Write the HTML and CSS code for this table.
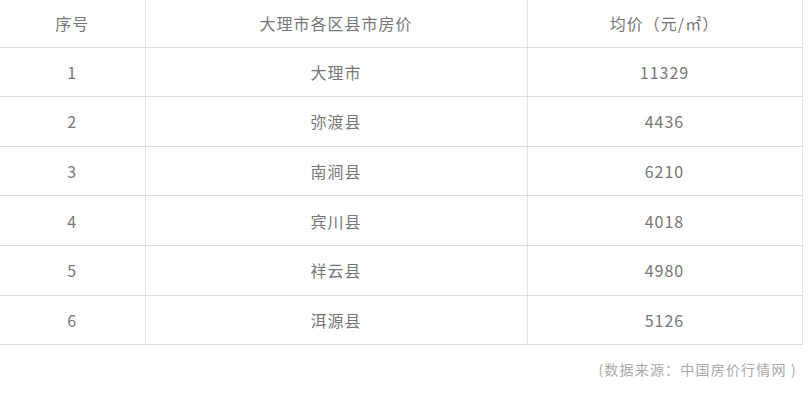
FILE: index.html
```html
<!DOCTYPE html>
<html lang="zh">
<head>
<meta charset="utf-8">
<link rel="stylesheet" href="styles.css">
</head>
<body>
<div class="page">
  <table class="price-table">
    <colgroup>
      <col class="c1">
      <col class="c2">
      <col class="c3">
    </colgroup>
    <thead>
      <tr><th>序号</th><th>大理市各区县市房价</th><th>均价（元/㎡）</th></tr>
    </thead>
    <tbody>
      <tr><td>1</td><td>大理市</td><td>11329</td></tr>
      <tr><td>2</td><td>弥渡县</td><td>4436</td></tr>
      <tr><td>3</td><td>南涧县</td><td>6210</td></tr>
      <tr><td>4</td><td>宾川县</td><td>4018</td></tr>
      <tr><td>5</td><td>祥云县</td><td>4980</td></tr>
      <tr><td>6</td><td>洱源县</td><td>5126</td></tr>
    </tbody>
  </table>
  <p class="source">(数据来源：中国房价行情网 )</p>
</div>
</body>
</html>
```

FILE: styles.css
```css
html, body {
  margin: 0;
  padding: 0;
  background: #ffffff;
}
.page {
  width: 808px;
  font-family: "Noto Sans CJK SC", "Noto Sans", sans-serif;
  color: #777777;
}
.price-table {
  width: 802px;
  border-collapse: collapse;
  table-layout: fixed;
}
.c1 { width: 145px; }
.c2 { width: 382px; }
.c3 { width: 275px; }
.price-table th,
.price-table td {
  text-align: center;
  vertical-align: middle;
  font-weight: 400;
  font-size: 16px;
  letter-spacing: 1px;
  padding: 0;
  border-left: 1px solid #e6e6e6;
  border-right: 1px solid #e6e6e6;
  border-bottom: 1px solid #dddddd;
}
.price-table th:first-child,
.price-table td:first-child {
  border-left: none;
}
.price-table thead tr {
  height: 47px;
}
.price-table tbody tr {
  height: 49.67px;
}
.source {
  margin: 14px 0 0;
  width: 797px;
  text-align: right;
  font-size: 14px;
  color: #aaaaaa;
  letter-spacing: 1.2px;
}
```
